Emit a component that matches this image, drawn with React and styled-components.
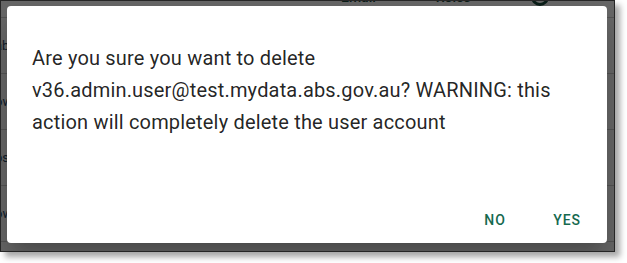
import React from 'react'
import styled, { createGlobalStyle } from 'styled-components'

const GlobalStyle = createGlobalStyle`
  html, body {
    margin: 0;
    padding: 0;
    background: #ffffff;
  }
  body {
    font-family: Roboto, "Liberation Sans", Arial, sans-serif;
  }
`

const rows = [
  { label: 'ab' },
  { label: 'ow' },
  { label: 'ps' },
  { label: 'ow' },
  { label: 'ps' },
]

const App = () => {
  return (
    <Canvas>
      <GlobalStyle />
      <Frame>
        <Page>
          <PageHeader>
            <HeaderText>Email</HeaderText>
            <HeaderText>Roles</HeaderText>
            <HeaderDot />
          </PageHeader>
          {rows.map((r, i) => (
            <Row key={i}>
              <RowText>{r.label}</RowText>
            </Row>
          ))}
        </Page>
        <Backdrop>
          <Dialog role="dialog">
            <Message>
              Are you sure you want to delete v36.admin.user@test.mydata.abs.gov.au? WARNING: this
              action will completely delete the user account
            </Message>
            <Actions>
              <ActionButton>No</ActionButton>
              <ActionButton>Yes</ActionButton>
            </Actions>
          </Dialog>
        </Backdrop>
      </Frame>
    </Canvas>
  )
}

const Canvas = styled.div`
  width: 627px;
  height: 263px;
  overflow: hidden;
`

const Frame = styled.div`
  position: relative;
  width: 615px;
  height: 252px;
  box-sizing: border-box;
  border: 1px solid #262626;
  overflow: hidden;
  box-shadow: 5px 5px 6px rgba(0, 0, 0, 0.35);
  background: #ffffff;
`

const Page = styled.div`
  display: flex;
  flex-direction: column;
`

const PageHeader = styled.div`
  display: flex;
  align-items: center;
  gap: 60px;
  height: 40px;
  padding-left: 340px;
  margin-top: -24px;
  border-bottom: 1px solid #cfcfcf;
`

const HeaderText = styled.span`
  font-size: 14px;
  font-weight: 500;
  color: #1b4d3e;
`

const HeaderDot = styled.span`
  width: 12px;
  height: 12px;
  border-radius: 50%;
  border: 3px solid #1b4d3e;
`

const Row = styled.div`
  display: flex;
  align-items: center;
  height: 55px;
  border-bottom: 1px solid #cfcfcf;
`

const RowText = styled.span`
  font-size: 13px;
  color: #2a4a6a;
  margin-left: -6px;
`

const Backdrop = styled.div`
  position: absolute;
  inset: 0;
  background: rgba(0, 0, 0, 0.6);
  display: flex;
  padding: 5px 7px 8px 6px;
  box-sizing: border-box;
`

const Dialog = styled.div`
  flex: 1;
  display: flex;
  flex-direction: column;
  justify-content: space-between;
  background: #ffffff;
  border-radius: 4px;
  box-shadow: 0 11px 15px -7px rgba(0, 0, 0, 0.2), 0 24px 38px 3px rgba(0, 0, 0, 0.14);
  padding: 36px 8px 5px 25px;
  box-sizing: border-box;
`

const Message = styled.p`
  margin: 0;
  font-size: 20px;
  line-height: 32px;
  letter-spacing: 0.18px;
  color: rgba(0, 0, 0, 0.87);
  max-width: 545px;
`

const Actions = styled.div`
  display: flex;
  justify-content: flex-end;
  gap: 8px;
`

const ActionButton = styled.button`
  min-width: 64px;
  height: 36px;
  padding: 0 8px;
  border: none;
  background: transparent;
  font-family: Roboto, "Liberation Sans", Arial, sans-serif;
  font-size: 14px;
  font-weight: 500;
  letter-spacing: 0.06em;
  text-transform: uppercase;
  color: #16694f;
  cursor: pointer;
`

export default App
